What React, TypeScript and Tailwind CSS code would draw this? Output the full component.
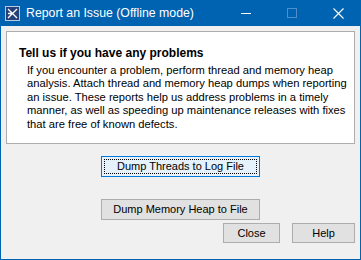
const AppIcon = () => (
  <svg width="15" height="15" viewBox="0 0 15 15">
    <rect x="0.5" y="0.5" width="14" height="14" fill="#23407a" stroke="#b9c9e0" />
    <path d="M3 3 L12 12 M12 3 L3 12 M7.5 7.5 L3 7.5" stroke="#ffffff" strokeWidth="1.3" fill="none" />
  </svg>
);

const TitleBar = () => (
  <div className="h-[26px] bg-[#0063b1] flex items-center text-white">
    <div className="ml-[5px] mr-[6px] flex items-center">
      <AppIcon />
    </div>
    <span className="text-[12.3px] font-['Liberation_Sans',sans-serif]">Report an Issue (Offline mode)</span>
    <div className="ml-auto flex h-full">
      <div className="w-[46px] h-full flex items-center justify-center">
        <svg width="10" height="10" viewBox="0 0 10 10">
          <path d="M0 5.5 H10" stroke="#ffffff" strokeWidth="1" />
        </svg>
      </div>
      <div className="w-[46px] h-full flex items-center justify-center">
        <svg width="10" height="10" viewBox="0 0 10 10">
          <rect x="0.5" y="0.5" width="9" height="9" fill="none" stroke="#4d8fcb" strokeWidth="1" />
        </svg>
      </div>
      <div className="w-[46px] h-full flex items-center justify-center">
        <svg width="11" height="11" viewBox="0 0 11 11">
          <path d="M0.5 0.5 L10.5 10.5 M10.5 0.5 L0.5 10.5" stroke="#ffffff" strokeWidth="1.1" />
        </svg>
      </div>
    </div>
  </div>
);

const App: React.FC = () => {
  return (
    <div className="w-[361px] h-[260px] bg-[#0063b1] flex flex-col font-['Liberation_Sans',sans-serif]">
      <TitleBar />
      <div className="flex-1 mx-px mb-px bg-[#f0f0f0] flex flex-col px-[5px] pt-[5px] text-[11px] text-black">
        <div className="h-[113px] bg-white border border-[#adadad] pl-[12px] pt-[14px]">
          <h1 className="text-[12px] leading-[14px] font-bold">Tell us if you have any problems</h1>
          <p className="mt-[4px] ml-[8px] text-[11.2px] leading-[13.4px] whitespace-nowrap">
            If you encounter a problem, perform thread and memory heap
            <br />
            analysis. Attach thread and memory heap dumps when reporting
            <br />
            an issue. These reports help us address problems in a timely
            <br />
            manner, as well as speeding up maintenance releases with fixes
            <br />
            that are free of known defects.
          </p>
        </div>
        <div className="flex flex-col items-center mt-[12px] gap-[22px]">
          <button className="w-[159px] h-[21px] bg-[#e5f1fb] border border-[#0078d7] outline-1 outline-dotted outline-black outline-offset-[-4px]">
            Dump Threads to Log File
          </button>
          <button className="w-[159px] h-[21px] bg-[#e1e1e1] border border-[#adadad]">
            Dump Memory Heap to File
          </button>
        </div>
        <div className="flex justify-end gap-[12px] mt-[3px]">
          <button className="w-[57px] h-[20px] bg-[#e1e1e1] border border-[#adadad]">Close</button>
          <button className="w-[63px] h-[20px] bg-[#e1e1e1] border border-[#adadad]">Help</button>
        </div>
      </div>
    </div>
  );
};

export default App;
